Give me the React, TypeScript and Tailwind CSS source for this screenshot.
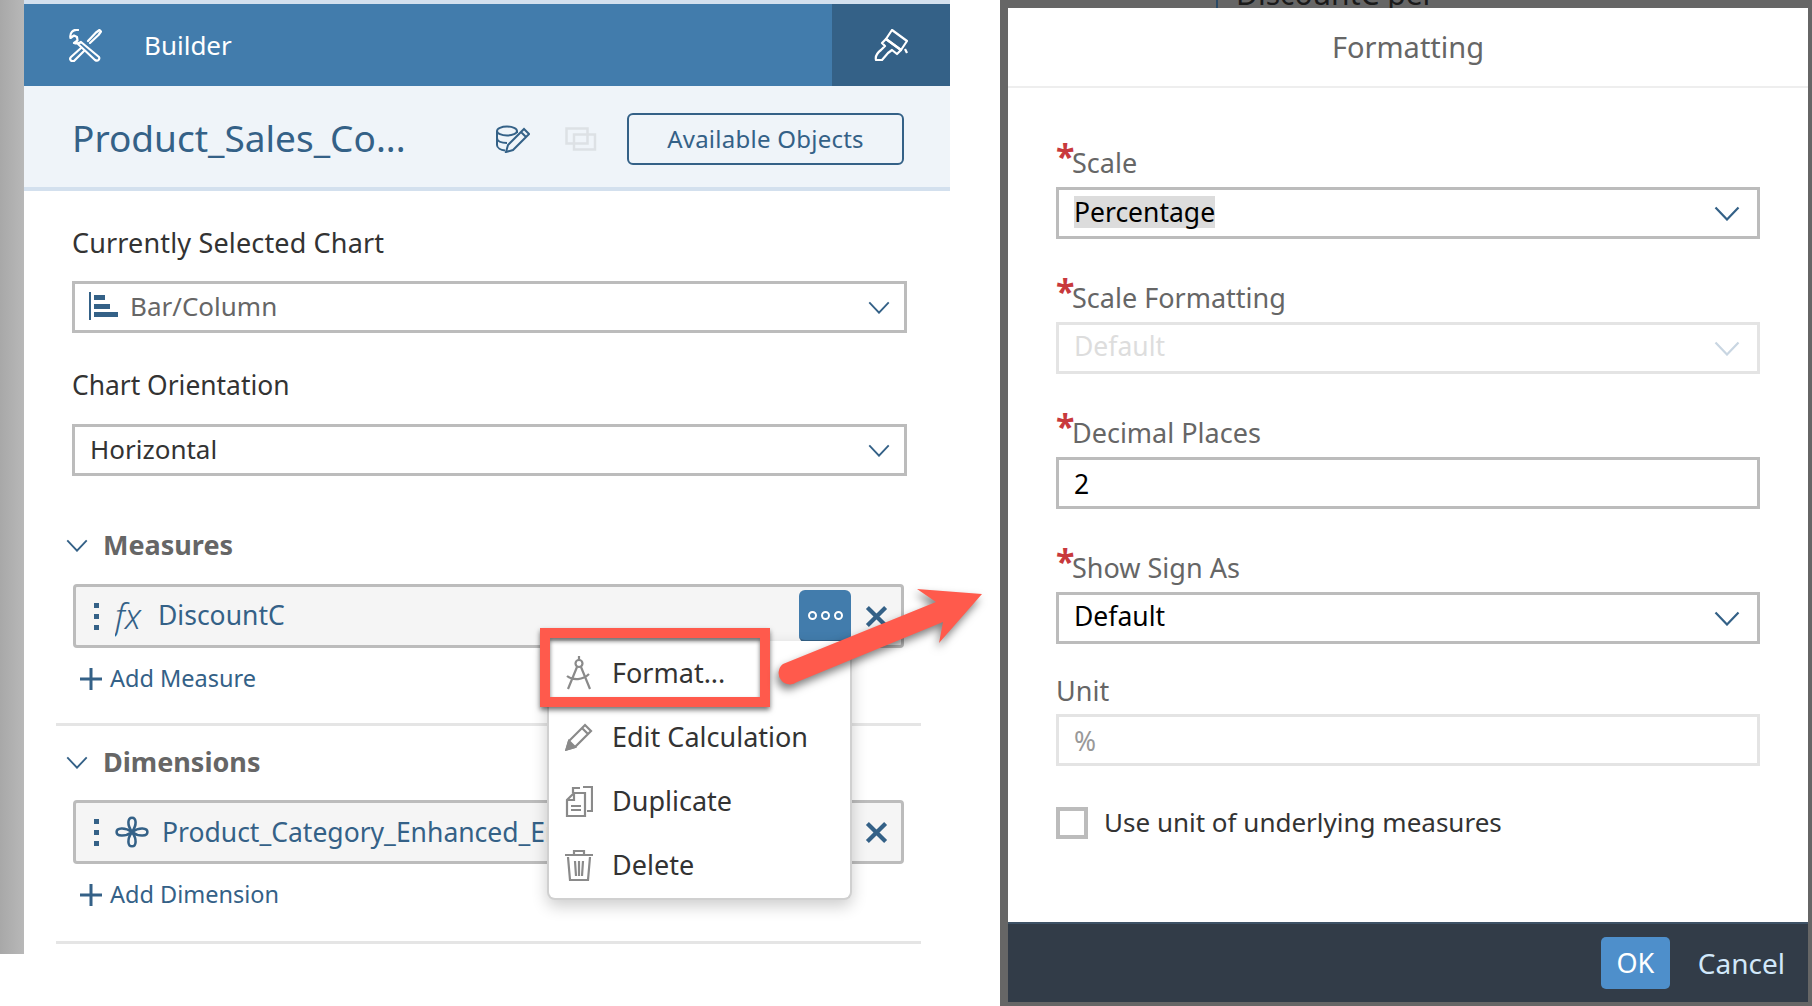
import React from "react";

const Chevron = ({ light = false, small = false }: { light?: boolean; small?: boolean }) => (
  <svg width={small ? 22 : 26} height={small ? 13 : 15} viewBox="0 0 26 15" preserveAspectRatio="none" fill="none" stroke={light ? "#c9d6e2" : "#346187"} strokeWidth="2.2">
    <path d="M1.5 1.5 L13 13.5 L24.5 1.5" />
  </svg>
);

const Select = ({ children, disabled = false, small = false, pad = "pl-[15px]", cls = "" }: { children: React.ReactNode; disabled?: boolean; small?: boolean; pad?: string; cls?: string }) => (
  <div className={`flex items-center justify-between h-[52px] border-[3px] bg-white ${small ? "pr-[14px]" : "pr-[17px]"} ${pad} ${disabled ? "border-[#e4e4e4]" : "border-[#bcbcbc]"} ${cls}`}>
    <div className="flex items-center pb-[2px]">{children}</div>
    <Chevron light={disabled} small={small} />
  </div>
);

const XIcon = () => (
  <svg width="23" height="23" viewBox="0 0 24 24" stroke="#346187" strokeWidth="4.4" fill="none">
    <path d="M2.5 2.5 L21.5 21.5 M21.5 2.5 L2.5 21.5" />
  </svg>
);

const Dots = () => (
  <div className="flex flex-col gap-[6px] w-[5px]">
    <div className="h-[5px] w-[5px] bg-[#346187]" />
    <div className="h-[5px] w-[5px] bg-[#346187]" />
    <div className="h-[5px] w-[5px] bg-[#346187]" />
  </div>
);

const Plus = () => (
  <svg width="22" height="22" viewBox="0 0 22 22" stroke="#346187" strokeWidth="3">
    <path d="M0 11 H22 M11 0 V22" />
  </svg>
);

const Req = ({ label, req = true }: { label: string; req?: boolean }) => (
  <div className={`relative h-[46px] text-[27px] leading-[36px] text-[#666666] ${req ? "pt-[4px]" : "pt-[5px]"}`}>
    {req && <span className="absolute left-0 -top-[2px] text-[34px] leading-[34px] font-bold text-[#c8393c]">*</span>}
    <span className={req ? "pl-[16px]" : ""}>{label}</span>
  </div>
);

const Tools = () => (
  <svg width="34" height="33" viewBox="0 0 34 33" fill="none" stroke="#fff" strokeWidth="2.2" strokeLinejoin="round" strokeLinecap="round">
    <path d="M10 1 C5 0 1.5 4 2.5 9 L6 6.5 L9 8 L9.5 11.5 L6 14 C9 15 11 14.5 13 13 L31 28 C32 30 30 33 27 31 L10 15" />
    <path d="M20 12 L28 3.5 L31.5 1 L33 2.5 L30.5 6 L22 14" />
    <path d="M13 19 L3 28 C1 30 3 33 6 32 L16 22" />
  </svg>
);

const Brush = () => (
  <svg width="34" height="32" viewBox="0 0 34 32" fill="none" stroke="#fff" strokeWidth="2.2" strokeLinejoin="round">
    <path d="M18 1 L33 12 L27 21 L12 10 Z" />
    <path d="M12 10 L27 21 L23 25 L18 21 L14 24 L8 31 L2 31 C1 27 3 24 7 21 L11 17 L8 14 Z" />
    <path d="M31 20 L33 24" />
  </svg>
);

const DbPencil = () => (
  <svg width="34" height="28" viewBox="0 0 34 28" fill="none" stroke="#346187" strokeWidth="2">
    <ellipse cx="11" cy="6" rx="10" ry="4.5" />
    <path d="M1 6 V20 C1 23 5 25 9 25.5 M1 13 C1 16 5 18 11 18 M21 6 V8" />
    <path d="M10 27 L12 20 L28 4 L33 9 L17 25 Z M25 7 L30 12" />
  </svg>
);

const CopyBox = () => (
  <svg width="32" height="24" viewBox="0 0 32 24" fill="none" stroke="#dde1e5" strokeWidth="2.5">
    <rect x="1.5" y="1.5" width="21" height="15" />
    <rect x="9" y="7.5" width="21" height="15" />
  </svg>
);

const BarIcon = () => (
  <svg width="29" height="28" viewBox="0 0 29 28" fill="#346187" className="mr-[12px]">
    <rect x="0" y="0" width="2" height="28" />
    <rect x="5" y="3" width="11" height="5" />
    <rect x="5" y="12" width="16" height="5" />
    <rect x="5" y="20" width="24" height="5" />
  </svg>
);

const Flower = () => (
  <svg width="34" height="32" viewBox="0 0 32 30" fill="none" stroke="#346187" strokeWidth="2.4">
    <path d="M16 15 C11 8 12 1.5 16 1.5 C20 1.5 21 8 16 15 C23 10 30.5 11 30.5 15 C30.5 19 23 20 16 15 C21 22 20 28.5 16 28.5 C12 28.5 11 22 16 15 C9 20 1.5 19 1.5 15 C1.5 11 9 10 16 15 Z" />
  </svg>
);

const Compass = () => (
  <svg width="28" height="34" viewBox="0 0 28 34" fill="none" stroke="#8a8a8a" strokeWidth="2.2">
    <circle cx="14" cy="7.5" r="3.5" />
    <path d="M14 0 V4 M12 11 L3 33 M16 11 L25 33 M2 20 C8 25 18 24 24 18" />
  </svg>
);

const Pencil = () => (
  <svg width="28" height="28" viewBox="0 0 28 28" fill="none" stroke="#8a8a8a" strokeWidth="2.2">
    <path d="M1.5 26.5 L4 18 L20 2 L26 8 L10 24 Z M17 5 L23 11" />
    <path d="M1.5 26.5 L4 18 L10 24 Z" fill="#8a8a8a" />
  </svg>
);

const Docs = () => (
  <svg width="28" height="32" viewBox="0 0 28 32" fill="none" stroke="#8a8a8a" strokeWidth="2.2">
    <path d="M8 8 V3 H15 M18 2 H27 V26 H22" />
    <path d="M9 8 H20 V31 H2 V15 Z M2 15 H9 V8" />
    <path d="M6 21 H16 M6 25 H16" />
  </svg>
);

const Trash = () => (
  <svg width="28" height="32" viewBox="0 0 28 32" fill="none" stroke="#8a8a8a" strokeWidth="2.2">
    <path d="M0 6 H28 M9 5 V2 H19 V5" />
    <path d="M3 8 L5 31 H23 L25 8" />
    <path d="M10 12 L11 27 M14 12 V27 M18 12 L17 27" />
  </svg>
);

const MenuRow = ({ icon, label }: { icon: React.ReactNode; label: string }) => (
  <div className="flex items-center h-[64px] pl-[16px]">
    <div className="w-[47px] flex justify-start">{icon}</div>
    <span className="text-[27px] text-[#333333]">{label}</span>
  </div>
);

const Section = ({ title }: { title: string }) => (
  <div className="flex items-center h-[40px] pl-[10px]">
    <Chevron small />
    <span className="ml-[15px] text-[27px] font-bold text-[#666666]">{title}</span>
  </div>
);

const ItemCard = ({ children, button = false }: { children: React.ReactNode; button?: boolean }) => (
  <div className="flex items-center h-[64px] mx-[17px] pl-[18px] pr-[13px] border-[3px] rounded-[4px] border-[#bcbcbc] bg-[#f5f5f5]">
    <Dots />
    <div className="flex items-center flex-1 ml-[16px] whitespace-nowrap overflow-hidden text-[26.5px] text-[#346187]">{children}</div>
    {button && (
      <div className="flex items-center justify-center gap-[4px] w-[52px] h-[52px] rounded-[6px] bg-[#427cac] border-b-2 border-[#346187] mr-[14px]">
        <div className="w-[9px] h-[9px] rounded-full border-[2.5px] border-white bg-[#427cac]" />
        <div className="w-[9px] h-[9px] rounded-full border-[2.5px] border-white bg-[#427cac]" />
        <div className="w-[9px] h-[9px] rounded-full border-[2.5px] border-white bg-[#427cac]" />
      </div>
    )}
    <XIcon />
  </div>
);

const AddRow = ({ label }: { label: string }) => (
  <div className="flex items-center h-[60px] ml-[24px] mt-[1px]">
    <Plus />
    <span className="ml-[8px] text-[23.5px] text-[#346187]">{label}</span>
  </div>
);

export default function App() {
  return (
    <div className="relative flex w-[1812px] h-[1006px] overflow-hidden bg-white font-['Noto_Sans',sans-serif]">
      <div className="w-[24px] h-[954px] bg-gradient-to-r from-[#a8a8a8] to-[#b8b8b8]" />

      {/* Builder panel */}
      <div className="flex flex-col w-[926px] h-[954px] border-t-[4px] border-[#d3e0ee]">
        <div className="flex items-center justify-between h-[82px] pl-[44px] bg-[#427cac]">
          <div className="flex items-center">
            <Tools />
            <span className="ml-[42px] text-[26px] text-white">Builder</span>
          </div>
          <div className="flex items-center justify-center w-[118px] h-full bg-[#346187]">
            <Brush />
          </div>
        </div>

        <div className="flex items-center h-[105px] pl-[48px] pt-[4px] bg-[#eff4f9] border-b-[4px] border-[#d3e0ee]">
          <span className="w-[424px] pb-[2px] text-[37px] text-[#346187]">Product_Sales_Co...</span>
          <DbPencil />
          <div className="ml-[35px]"><CopyBox /></div>
          <div className="ml-[30px] flex items-center justify-center w-[277px] h-[52px] rounded-[6px] border-[2.5px] border-[#346187] text-[24px] tracking-[0.25px] text-[#346187]">
            Available Objects
          </div>
        </div>

        <div className="flex flex-col pl-[48px] pr-[43px] pt-[32px]">
          <div className="h-[40px] text-[27px] tracking-[0.15px] leading-[40px] text-[#333333]">Currently Selected Chart</div>
          <Select small pad="pl-[14px]" cls="mt-[18px]">
            <BarIcon />
            <span className="text-[26px] text-[#666666]">Bar/Column</span>
          </Select>
          <div className="h-[40px] mt-[32px] text-[26.4px] leading-[40px] text-[#333333]">Chart Orientation</div>
          <Select small cls="mt-[19px]">
            <span className="text-[26px] text-[#333333]">Horizontal</span>
          </Select>
        </div>

        <div className="flex flex-col ml-[32px] w-[865px] mt-[49px]">
          <Section title="Measures" />
          <div className="mt-[19px]">
            <ItemCard button>
              <span className="italic font-light text-[34px] w-[43px]">fx</span>
              <span>DiscountC</span>
            </ItemCard>
          </div>
          <AddRow label="Add Measure" />
          <div className="h-[3px] mt-[14px] bg-[#e5e5e5]" />
          <div className="mt-[16px]"><Section title="Dimensions" /></div>
          <div className="mt-[18px]">
            <ItemCard>
              <Flower />
              <span className="ml-[13px] pt-[2px]">Product_Category_Enhanced_Enh</span>
            </ItemCard>
          </div>
          <AddRow label="Add Dimension" />
          <div className="h-[3px] mt-[16px] bg-[#e5e5e5]" />
        </div>
      </div>

      {/* Formatting dialog */}
      <div className="relative ml-[50px] w-[812px] h-[1006px] bg-[#666666] pt-[8px] pl-[8px] pr-[4px] pb-[4px]">
        <div className="absolute left-[216px] top-0 h-[8px] w-[2px] bg-[#2b4a66]" />
        <div className="absolute left-[236px] -top-[24px] text-[30px] leading-[36px] text-[#1a1a1a] whitespace-nowrap">DiscountC per</div>
        <div className="relative flex flex-col h-full bg-white">
          <div className="flex items-center justify-center h-[80px] border-b-[2px] border-[#eeeeee] text-[29px] text-[#666666]">Formatting</div>
          <div className="flex flex-col flex-1 pl-[48px] pr-[48px] pt-[53px]">
            <Req label="Scale" />
            <Select>
              <span className="bg-[#dcdcdc] text-[26.5px] leading-[32px] text-black">Percentage</span>
            </Select>
            <div className="mt-[37px]"><Req label="Scale Formatting" /></div>
            <Select disabled>
              <span className="text-[26.5px] text-[#dddddd]">Default</span>
            </Select>
            <div className="mt-[37px]"><Req label="Decimal Places" /></div>
            <div className="flex items-center h-[52px] pl-[15px] pt-[3px] border-[3px] border-[#bcbcbc] text-[26.5px] text-black">2</div>
            <div className="mt-[37px]"><Req label="Show Sign As" /></div>
            <Select>
              <span className="text-[26.5px] text-black">Default</span>
            </Select>
            <div className="mt-[24px]"><Req label="Unit" req={false} /></div>
            <div className="flex items-center h-[52px] pl-[15px] pt-[4px] border-[3px] border-[#e4e4e4] text-[26.5px] text-[#999999]">%</div>
            <div className="flex items-center mt-[37px]">
              <div className="w-[32px] h-[32px] border-[4px] border-[#bcbcbc]" />
              <span className="ml-[16px] text-[26px] text-[#333333]">Use unit of underlying measures</span>
            </div>
          </div>
          <div className="flex items-center justify-end h-[80px] pr-[23px] bg-[#323c48] border-t-[2px] border-[#3e5266]">
            <div className="flex items-center justify-center w-[69px] h-[52px] rounded-[5px] bg-[#4e8fcb] text-[27px] text-white">OK</div>
            <span className="ml-[28px] text-[28px] text-[#d1e8fa]">Cancel</span>
          </div>
        </div>
      </div>

      {/* Context menu */}
      <div className="absolute left-[547px] top-[641px] w-[305px] h-[259px] rounded-b-[8px] border-[2px] border-t-0 border-[#d0d0d0] bg-white shadow-[0_6px_16px_rgba(0,0,0,0.2)]">
        <MenuRow icon={<Compass />} label="Format..." />
        <MenuRow icon={<Pencil />} label="Edit Calculation" />
        <MenuRow icon={<Docs />} label="Duplicate" />
        <MenuRow icon={<Trash />} label="Delete" />
      </div>

      {/* Callout */}
      <div className="absolute left-[540px] top-[628px] w-[230px] h-[79px] border-[10px] border-[#ff5a4c] shadow-[0_3px_5px_rgba(0,0,0,0.55),inset_0_3px_4px_rgba(0,0,0,0.55)]" />
      <svg className="absolute left-[770px] top-[575px]" width="230" height="130" viewBox="770 575 230 130" style={{ filter: "drop-shadow(-2px 5px 4px rgba(0,0,0,0.5))" }}>
        <path d="M783 664 L936 602 L917 589 L982 594 L939 643 L943 622 L797 682 A10 10 0 0 1 783 664 Z" fill="#ff5a4c" />
      </svg>
    </div>
  );
}
